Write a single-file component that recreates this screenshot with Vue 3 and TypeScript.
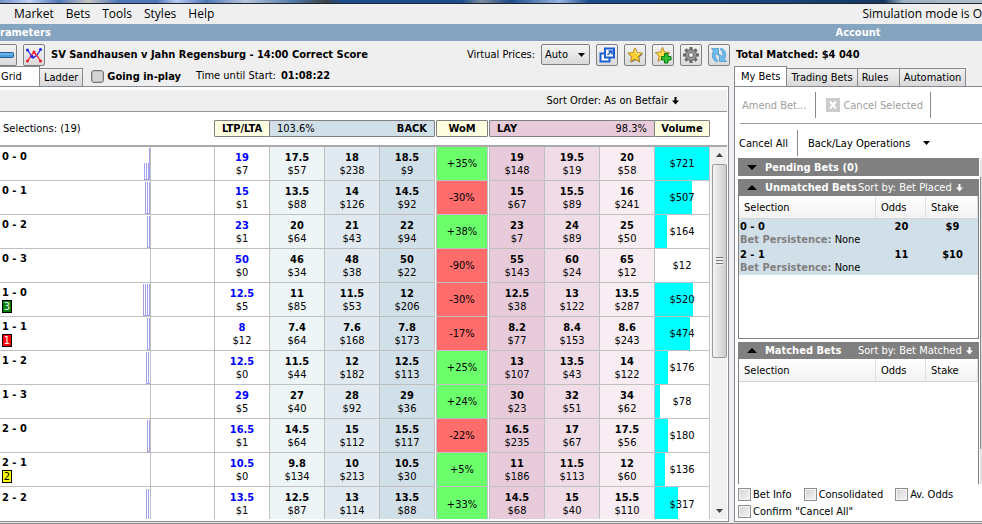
<script setup lang="ts">
interface Price { odds: string; amount: string }
interface Selection {
  name: string
  badge?: { text: string; bg: string; fg: string }
  spark: string
  ltp: Price
  back: Price[]
  wom: number
  lay: Price[]
  volume: number
  share: number
}

function prices(src: string): Price[] {
  return src.split(' ').map((p) => {
    const [odds, amount] = p.split('/')
    return { odds, amount: '$' + amount }
  })
}

function row(name: string, all: string, wom: number, volume: number, share: number, spark: string, badge?: Selection['badge']): Selection {
  const p = prices(all)
  return { name, ltp: p[0], back: p.slice(1, 4), lay: p.slice(4), wom, volume, share, spark, badge }
}

const bars4 = 'M1.5 1V33M3.5 1V33M5.5 1V33M7.5 1V33M1 32.5H8'
const bars3 = 'M3.5 1V33M5.5 1V33M7.5 1V33M3 32.5H8'
const bars2 = 'M5.5 1V33M7.5 1V33M5 32.5H8'
const early2 = 'M4.5 1V33M6.5 1V33M4 32.5H8'
const step = 'M2.5 16V33M4.5 16V33M6.5 16V33M7.5 1V33M2 32.5H8'

const selections: Selection[] = [
  row('0 - 0', '19/7 17.5/57 18/238 18.5/9 19/148 19.5/19 20/58', 35, 721, 54, step),
  row('0 - 1', '15/1 13.5/88 14/126 14.5/92 15/67 15.5/89 16/241', -30, 507, 37, bars3),
  row('0 - 2', '23/1 20/64 21/43 22/94 23/7 24/89 25/50', 38, 164, 12, bars2),
  row('0 - 3', '50/0 46/34 48/38 50/22 55/143 60/24 65/12', -90, 12, 0, ''),
  row('1 - 0', '12.5/5 11/85 11.5/53 12/206 12.5/38 13/122 13.5/287', -30, 520, 38, bars4, { text: '3', bg: '#008000', fg: '#fff' }),
  row('1 - 1', '8/12 7.4/64 7.6/168 7.8/173 8.2/77 8.4/153 8.6/243', -17, 474, 35, bars2, { text: '1', bg: '#f00', fg: '#fff' }),
  row('1 - 2', '12.5/0 11.5/44 12/182 12.5/113 13/107 13.5/43 14/122', 25, 176, 13, early2),
  row('1 - 3', '29/5 27/40 28/92 29/36 30/23 32/51 34/62', 24, 78, 5, ''),
  row('2 - 0', '16.5/1 14.5/64 15/112 15.5/117 16.5/235 17/67 17.5/56', -22, 180, 13, bars2),
  row('2 - 1', '10.5/0 9.8/134 10/213 10.5/30 11/186 11.5/113 12/60', 5, 136, 10, '', { text: '2', bg: '#ff0', fg: '#000' }),
  row('2 - 2', '13.5/1 12.5/87 13/114 13.5/88 14.5/68 15/40 15.5/110', 33, 317, 23, early2),
]

const bets = [
  { name: '0 - 0', odds: '20', stake: '$9' },
  { name: '2 - 1', odds: '11', stake: '$10' },
]
const menus = ['Market', 'Bets', 'Tools', 'Styles', 'Help']
const star = 'M8 .8l2.1 4.8 5.2.5-3.9 3.5 1.1 5.2L8 12.1l-4.5 2.7 1.1-5.2L.7 6.1l5.2-.5z'
const teeth = [0, 45, 90, 135]
</script>

<template>
  <div class="app">
    <div class="backdrop"></div>
    <nav class="menubar">
      <button v-for="m in menus" :key="m" class="menu">{{ m }}</button>
      <span class="sim">Simulation mode is O</span>
    </nav>
    <div class="titles">
      <h2 class="params">rameters</h2>
      <h2 class="account">Account</h2>
    </div>

    <div class="main">
      <section class="market">
        <div class="toolbar">
          <button class="tool cut" aria-label="Collapse"><svg width="20" height="20" viewBox="0 0 20 20"><rect x="-2" y="7.5" width="15.500" height="5" rx="1" fill="#4aa0dc" stroke="#245c94" /><path d="M0 9h13" stroke="#8cc8f0" /></svg></button>
          <button class="tool" aria-label="Chart"><svg width="20" height="20" viewBox="0 0 20 20"><path d="M3.500 5l5.500 8 4-3 4-6" fill="none" stroke="#2828f0" stroke-width="1.300" /><path d="M3.500 16l3.500-5 3-4 3 4 3.500 5" fill="none" stroke="#f02030" stroke-width="1.300" /><g fill="#2828f0"><circle cx="3.500" cy="5" r="1.600" /><circle cx="8" cy="11.500" r="1.600" /><circle cx="16.500" cy="4.500" r="1.600" /></g><g fill="#f02030"><circle cx="3.500" cy="16" r="1.600" /><circle cx="10" cy="7" r="1.600" /><circle cx="16.500" cy="16" r="1.600" /></g></svg></button>
          <h1>SV Sandhausen v Jahn Regensburg - 14:00 Correct Score</h1>
          <label class="vp" for="vp">Virtual Prices:</label>
          <span class="drop"><select id="vp"><option>Auto</option></select><svg width="7" height="4" viewBox="0 0 7 4"><path d="M0 0h7L3.500 4z" /></svg></span>
          <button class="tool" aria-label="Open window"><svg width="20" height="20" viewBox="0 0 20 20"><path d="M7 8.500H3.500v8h9V13" fill="#fff" stroke="#1c60d0" stroke-width="2" /><rect x="8" y="3.500" width="9" height="9" fill="#fff" stroke="#1c60d0" stroke-width="2" /><path d="M10.500 10l4-4M11.500 6H15v3.500" fill="none" stroke="#1c60d0" stroke-width="1.500" /></svg></button>
          <button class="tool" aria-label="Favourites"><svg width="20" height="20" viewBox="-2 -2 20 20"><path :d="star" transform="translate(.8 1)" fill="#777" /><path :d="star" fill="#ffd030" stroke="#a87818" stroke-width=".8" /><path d="M8 3l1.300 3.400 3 .4" fill="none" stroke="#fff3a0" /></svg></button>
          <button class="tool" aria-label="Add favourite"><svg width="20" height="20" viewBox="-2 -2 20 20"><path :d="star" transform="translate(-.5 -.5)" fill="#ffd84a" stroke="#a87818" stroke-width=".8" /><path d="M9.500 6.500h3.500v3h3v3.500h-3v3H9.500v-3h-3V9.500h3z" fill="#30c030" stroke="#08780c" /></svg></button>
          <button class="tool" aria-label="Settings"><svg width="20" height="20" viewBox="0 0 20 20"><g stroke="#666" stroke-width="3"><path v-for="a in teeth" :key="a" d="M10 2v16" :transform="`rotate(${a} 10 10)`" /></g><circle cx="10" cy="10" r="5.500" fill="#999" stroke="#666" /><circle cx="10" cy="10" r="2.500" fill="#eee" stroke="#666" /></svg></button>
          <button class="tool" aria-label="Refresh"><svg width="20" height="20" viewBox="0 0 20 20"><g fill="#6cbcec" stroke="#4090cc" stroke-width=".7"><path d="M2.500 3.500h7v7L7 8.500c-1.500 2-1 4.500 1.500 6.500l-.5 2C3.500 15 2 10.500 4.500 6z" /><path d="M17.500 16.500h-7v-7l2.500 2c1.500-2 1-4.500-1.500-6.500l.5-2c4.500 2 6 6.500 3.500 11z" /></g></svg></button>
        </div>
        <div class="tabs">
          <button class="tab on grid-tab">Grid</button>
          <button class="tab">Ladder</button>
          <label class="inplay"><input type="checkbox" />Going in-play</label>
          <span class="until">Time until Start:</span><b>01:08:22</b>
        </div>
        <div class="grid-panel">
          <div class="sort">
            <button>Sort Order: As on Betfair</button>
            <svg width="7" height="8" viewBox="0 0 7 8"><path d="M2.500 0h2v3.500H7L3.500 7.500 0 3.500h2.500z" /></svg>
          </div>
          <div class="heads">
            <span class="count">Selections: (19)</span>
            <b class="cap ltp">LTP/LTA</b>
            <span class="cap backcap"><span>103.6%</span><b>BACK</b></span>
            <b class="cap womcap">WoM</b>
            <span class="cap laycap"><b>LAY</b><span>98.3%</span></span>
            <b class="cap vol">Volume</b>
          </div>
          <div class="book">
            <div class="viewport">
              <table>
                <colgroup>
                  <col /><col class="c-blank" /><col class="c-price" span="4" /><col class="c-gap" /><col class="c-wom" /><col class="c-gap" /><col class="c-price" span="4" />
                </colgroup>
                <tbody>
                  <tr v-for="s in selections" :key="s.name">
                    <td class="name">
                      <div class="cell">
                        <div><b>{{ s.name }}</b><i v-if="s.badge" :style="{ background: s.badge.bg, color: s.badge.fg }">{{ s.badge.text }}</i></div>
                        <svg width="8" height="33" viewBox="0 0 8 33"><path :d="s.spark" stroke="#a0a0ec" /></svg>
                      </div>
                    </td>
                    <td></td>
                    <td class="last"><b>{{ s.ltp.odds }}</b>{{ s.ltp.amount }}</td>
                    <td v-for="(p, i) in s.back" :key="'b' + i" :class="'back' + i"><b>{{ p.odds }}</b>{{ p.amount }}</td>
                    <td class="gap"></td>
                    <td class="wom" :class="s.wom > 0 ? 'up' : 'down'">{{ s.wom > 0 ? '+' : '' }}{{ s.wom }}%</td>
                    <td class="gap"></td>
                    <td v-for="(p, i) in s.lay" :key="'l' + i" :class="'lay' + i"><b>{{ p.odds }}</b>{{ p.amount }}</td>
                    <td class="volume" :style="{ backgroundSize: s.share + 'px 100%' }">${{ s.volume }}</td>
                  </tr>
                </tbody>
              </table>
            </div>
            <div class="scroll">
              <svg width="7" height="4" viewBox="0 0 7 4"><path d="M0 4h7L3.500 0z" fill="#444" /></svg>
              <div class="thumb"><span></span></div>
              <svg class="end" width="7" height="4" viewBox="0 0 7 4"><path d="M0 0h7L3.500 4z" fill="#444" /></svg>
            </div>
          </div>
        </div>
      </section>

      <aside>
        <div class="total">Total Matched: $4 040</div>
        <div class="tabs">
          <button class="tab on">My Bets</button>
          <button class="tab">Trading Bets</button>
          <button class="tab rules">Rules</button>
          <button class="tab">Automation</button>
        </div>
        <div class="bets-panel">
          <div class="actions first">
            <button disabled>Amend Bet...</button>
            <button disabled class="cancel"><svg width="14" height="14" viewBox="0 0 14 14"><rect width="14" height="14" fill="#ccc" /><path d="M4 3.500l6 7M10 3.500l-6 7" stroke="#fff" stroke-width="2" /></svg>Cancel Selected</button>
          </div>
          <div class="actions second">
            <button>Cancel All</button>
            <button class="ops">Back/Lay Operations<svg width="7" height="4" viewBox="0 0 7 4"><path d="M0 0h7L3.500 4z" /></svg></button>
          </div>
          <div class="lists">
            <div class="stack">
              <div class="bar pending"><svg width="10" height="5" viewBox="0 0 10 5"><path d="M0 0h10L5 5z" /></svg><b>Pending Bets (0)</b></div>
              <div class="bar"><svg width="10" height="5" viewBox="0 0 10 5"><path d="M0 5h10L5 0z" /></svg><b>Unmatched Bets</b><span>Sort by: Bet Placed</span><svg class="arr" width="7" height="8" viewBox="0 0 7 8"><path d="M2.500 0h2v3.500H7L3.500 7.500 0 3.500h2.500z" fill="#fff" /></svg></div>
              <div class="list unmatched">
                <table>
                  <colgroup><col /><col class="c-odds" /><col class="c-stake" /></colgroup>
                  <thead><tr><th>Selection</th><th>Odds</th><th>Stake</th></tr></thead>
                  <tbody>
                    <tr v-for="b in bets" :key="b.name">
                      <td><b>{{ b.name }}</b><div><b class="pers">Bet Persistence:</b> None</div></td>
                      <td class="num"><b>{{ b.odds }}</b></td>
                      <td class="num"><b>{{ b.stake }}</b></td>
                    </tr>
                  </tbody>
                </table>
              </div>
              <div class="bar"><svg width="10" height="5" viewBox="0 0 10 5"><path d="M0 5h10L5 0z" /></svg><b>Matched Bets</b><span>Sort by: Bet Matched</span><svg class="arr" width="7" height="8" viewBox="0 0 7 8"><path d="M2.500 0h2v3.500H7L3.500 7.500 0 3.500h2.500z" fill="#fff" /></svg></div>
              <div class="list matched">
                <table>
                  <colgroup><col /><col class="c-odds" /><col class="c-stake" /></colgroup>
                  <thead><tr><th>Selection</th><th>Odds</th><th>Stake</th></tr></thead>
                </table>
              </div>
            </div>
            <div class="rail"><div></div></div>
          </div>
          <div class="checks">
            <label><input type="checkbox" />Bet Info</label>
            <label><input type="checkbox" />Consolidated</label>
            <label><input type="checkbox" />Av. Odds</label>
          </div>
          <div class="checks"><label><input type="checkbox" />Confirm "Cancel All"</label></div>
        </div>
      </aside>
    </div>
  </div>
</template>

<style>
body { margin: 0; background: #efefef; }
</style>

<style scoped>
* { box-sizing: border-box; }
.app { height: 100vh; display: flex; flex-direction: column; background: #efefef; color: #000; font: 11px/13px "DejaVu Sans Condensed", "Noto Sans", sans-serif; white-space: nowrap; overflow: hidden; }
button { font: inherit; color: inherit; background: none; border: 0; padding: 0; margin: 0; }
svg { display: block; flex: none; }
h1, h2 { margin: 0; font-size: 11px; font-weight: bold; }
.backdrop { flex: none; height: 4px; border-bottom: 1px solid #1c2430; background: linear-gradient(90deg, #7090c8, #c0d0f0 3%, #5078b8 6%, #c8c4c4 9%, #5078b8 12%, #5078b8 16%, #b8c8f0 18%, #5078b8 21%, #b8c4d8 25%, #5078a8 30%, #404448 33%, #1c4c8c 35%, #1c4c8c 47%, #7c8c9c 49%, #1c4c8c 52%, #98b4e0 57%, #1c4c8c 60%, #184478 80%, #143860 90%, #9cb0c0 92%, #b0c0cc); }
.menubar { flex: none; height: 20px; display: flex; align-items: center; gap: 12px; padding-left: 14px; font: 12px/16px "Open Sans", "Noto Sans", sans-serif; overflow: hidden; }
.sim { margin-left: auto; }
.titles { flex: none; height: 17px; display: flex; align-items: center; background: #84a4c0; color: #fff; }
.params { flex: 1; }
.account { width: 248px; text-align: center; }
.main { flex: 1; min-height: 0; display: flex; gap: 5px; padding-bottom: 1px; border-bottom: 1px solid #888; }
.market { flex: 1; min-width: 0; display: flex; flex-direction: column; }
.toolbar { flex: none; height: 25px; display: flex; align-items: center; gap: 6px; padding-top: 2px; margin-right: -1px; }
.tool { width: 22px; height: 22px; border: 1px solid #808080; border-radius: 2px; background: linear-gradient(#f4f4f4, #dadada); flex: none; }
.tool.cut { width: 17px; border-left: 0; border-radius: 0 2px 2px 0; overflow: hidden; }
.vp { margin-left: auto; }
.drop { display: flex; align-items: center; width: 49px; height: 21px; border: 1px solid #808080; border-radius: 2px; background: linear-gradient(#f4f4f4, #dadada); padding: 0 4px 0 3px; }
.drop select { appearance: none; flex: 1; min-width: 0; border: 0; background: none; font: inherit; padding: 0; color: inherit; }
.tabs { flex: none; height: 20px; display: flex; align-items: flex-end; }
.tab { height: 18px; padding: 0 4px; border: 1px solid #888; border-bottom: 0; border-left-width: 0; background: linear-gradient(#f2f2f2, #d8d8d8); }
.tab.on { height: 20px; padding: 0 6px 1px; background: #fff; border-left-width: 1px; }
.tab.grid-tab { width: 40px; padding: 0; border-left: 0; text-align: left; padding-left: 1px; }
.inplay { display: flex; align-items: center; gap: 3px; margin: 0 15px 0 8px; font-weight: bold; height: 20px; }
.until { line-height: 20px; margin-right: 5px; }
.tabs > b { line-height: 20px; }
.grid-panel { flex: 1; min-height: 0; display: flex; flex-direction: column; background: #fff; border: 1px solid #888890; border-left: 0; padding: 3px 1px 2px 0; }
.sort { flex: none; height: 22px; background: #efefef; border-bottom: 1px solid #999; display: flex; align-items: center; justify-content: flex-end; gap: 4px; padding-right: 48px; }
.heads { flex: none; height: 35px; border-bottom: 2px solid #aaa; display: flex; align-items: flex-start; padding: 8px 17px 0 0; }
.count { flex: 1; padding: 2px 0 0 3px; }
.cap { height: 17px; border: 1px solid #808080; border-radius: 1px; line-height: 16px; background: #ffffe1; text-align: center; }
.ltp { width: 56px; }
.backcap, .laycap { display: flex; justify-content: space-between; padding: 0 7px; width: 166px; background: #d1dfe8; margin-left: -1px; }
.laycap { background: #e8cbda; margin-left: 1px; }
.womcap { width: 52px; margin-left: 1px; }
.vol { width: 56px; margin-left: -1px; }
.book { flex: 1; min-height: 0; display: flex; }
.viewport { flex: 1; overflow: hidden; }
table { border-collapse: separate; border-spacing: 0; table-layout: fixed; width: 100%; }
.c-blank { width: 64px; }
.c-price { width: 55px; }
.c-gap { width: 2px; }
.c-wom { width: 51px; }
.book td { height: 34px; padding: 0; border: solid #c0c0c0; border-width: 0 1px 1px 0; text-align: center; vertical-align: middle; }
.book tr:last-child td { border-bottom: 0; }
.book td > b { display: block; }
.book .last b { color: #00f; }
.book td.gap { border-bottom: 0; }
.book td.name { text-align: left; }
.cell { display: flex; height: 33px; justify-content: space-between; padding-left: 2px; }
.cell b { display: block; padding-top: 3px; line-height: 14px; }
.cell i { display: block; width: 10px; height: 13px; border: 1px solid #000; font-style: normal; line-height: 11px; text-align: center; }
.back0 { background: #eef5f7; }
.back1 { background: #e0eaf0; }
.back2 { background: #d1dfe8; }
.lay0 { background: #e8cbda; }
.lay1 { background: #f0dce6; }
.lay2 { background: #f8edf3; }
.up { background: #6cff6c; }
.down { background: #ff6c6c; }
.volume { background: linear-gradient(#0ff, #0ff) no-repeat; }
.scroll { width: 16px; margin-left: 1px; background: #f0f0f0; display: flex; flex-direction: column; align-items: center; padding-top: 6px; }
.thumb { width: 15px; height: 194px; margin-top: 7px; border: 1px solid #999; border-radius: 2px; background: linear-gradient(90deg, #f4f4f4, #ccc); display: grid; place-items: center; }
.thumb span { width: 7px; height: 8px; background: repeating-linear-gradient(#777 0 1px, #eee 1px 3px); }
.scroll .end { margin-top: auto; margin-bottom: 6px; }
aside { width: 248px; flex: none; display: flex; flex-direction: column; }
.total { flex: none; height: 25px; line-height: 27px; font-weight: bold; padding-left: 2px; }
.rules { width: 42px; text-align: left; }
.bets-panel { flex: 1; min-height: 0; display: flex; flex-direction: column; background: #fff; border: solid #888890; border-width: 1px 0 1px 1px; padding: 0 0 3px 3px; }
.actions { flex: none; display: flex; align-items: center; }
.first { height: 37px; border-bottom: 1px solid #999; margin-left: 2px; padding-left: 2px; color: #a0a0a0; }
.first button { height: 26px; padding-right: 9px; border-right: 1px solid #888; }
.first .cancel { display: flex; align-items: center; gap: 3px; margin-left: 10px; padding-right: 7px; }
.second { height: 34px; padding: 4px 0 0 1px; }
.second button { height: 26px; }
.second button:first-child { padding-right: 9px; border-right: 1px solid #888; }
.ops { display: flex; align-items: center; gap: 13px; margin-left: 10px; }
.lists { flex: 1; min-height: 0; display: flex; gap: 1px; }
.stack { flex: 1; display: flex; flex-direction: column; }
.bar { flex: none; height: 17px; background: #808080; color: #fff; display: flex; align-items: center; padding-left: 9px; }
.bar b { margin-left: 8px; width: 93px; }
.pending { height: 18px; margin-bottom: 3px; }
.arr { margin-left: 4px; }
.list { border: 1px solid #808080; border-top: 0; }
.unmatched { flex: none; height: 143px; margin-bottom: 3px; }
.matched { flex: 1; min-height: 0; border-bottom: 0; }
.c-odds { width: 50px; }
.c-stake { width: 52px; }
.list th { height: 23px; padding: 0 0 0 5px; font-weight: normal; text-align: left; border-right: 1px solid #e0e0e0; border-bottom: 1px solid #d5d5d5; background: linear-gradient(#fff, #f2f2f2); }
.list td { height: 28px; padding: 1px 0 0 1px; background: #d1dfe8; vertical-align: top; }
.list td.num { text-align: center; }
.pers { color: #808080; }
.rail { width: 2px; background: #e4e4e4; padding-top: 19px; }
.rail div { height: 272px; border-left: 1px solid #888; background: #ddd; }
.checks { flex: none; height: 17px; display: flex; align-items: flex-end; gap: 12px; }
.checks label { display: flex; align-items: center; gap: 2px; }
input { appearance: none; width: 13px; height: 13px; margin: 0; border: 1px solid #8e8f8f; background: linear-gradient(135deg, #cfcfcf, #f8f8f8); box-shadow: inset 0 0 0 1px #f4f4f4; }
.inplay input { border: 1px solid #777; border-radius: 3px; background: #d4d4d4; box-shadow: inset 0 0 0 1px #bbb; }
</style>
